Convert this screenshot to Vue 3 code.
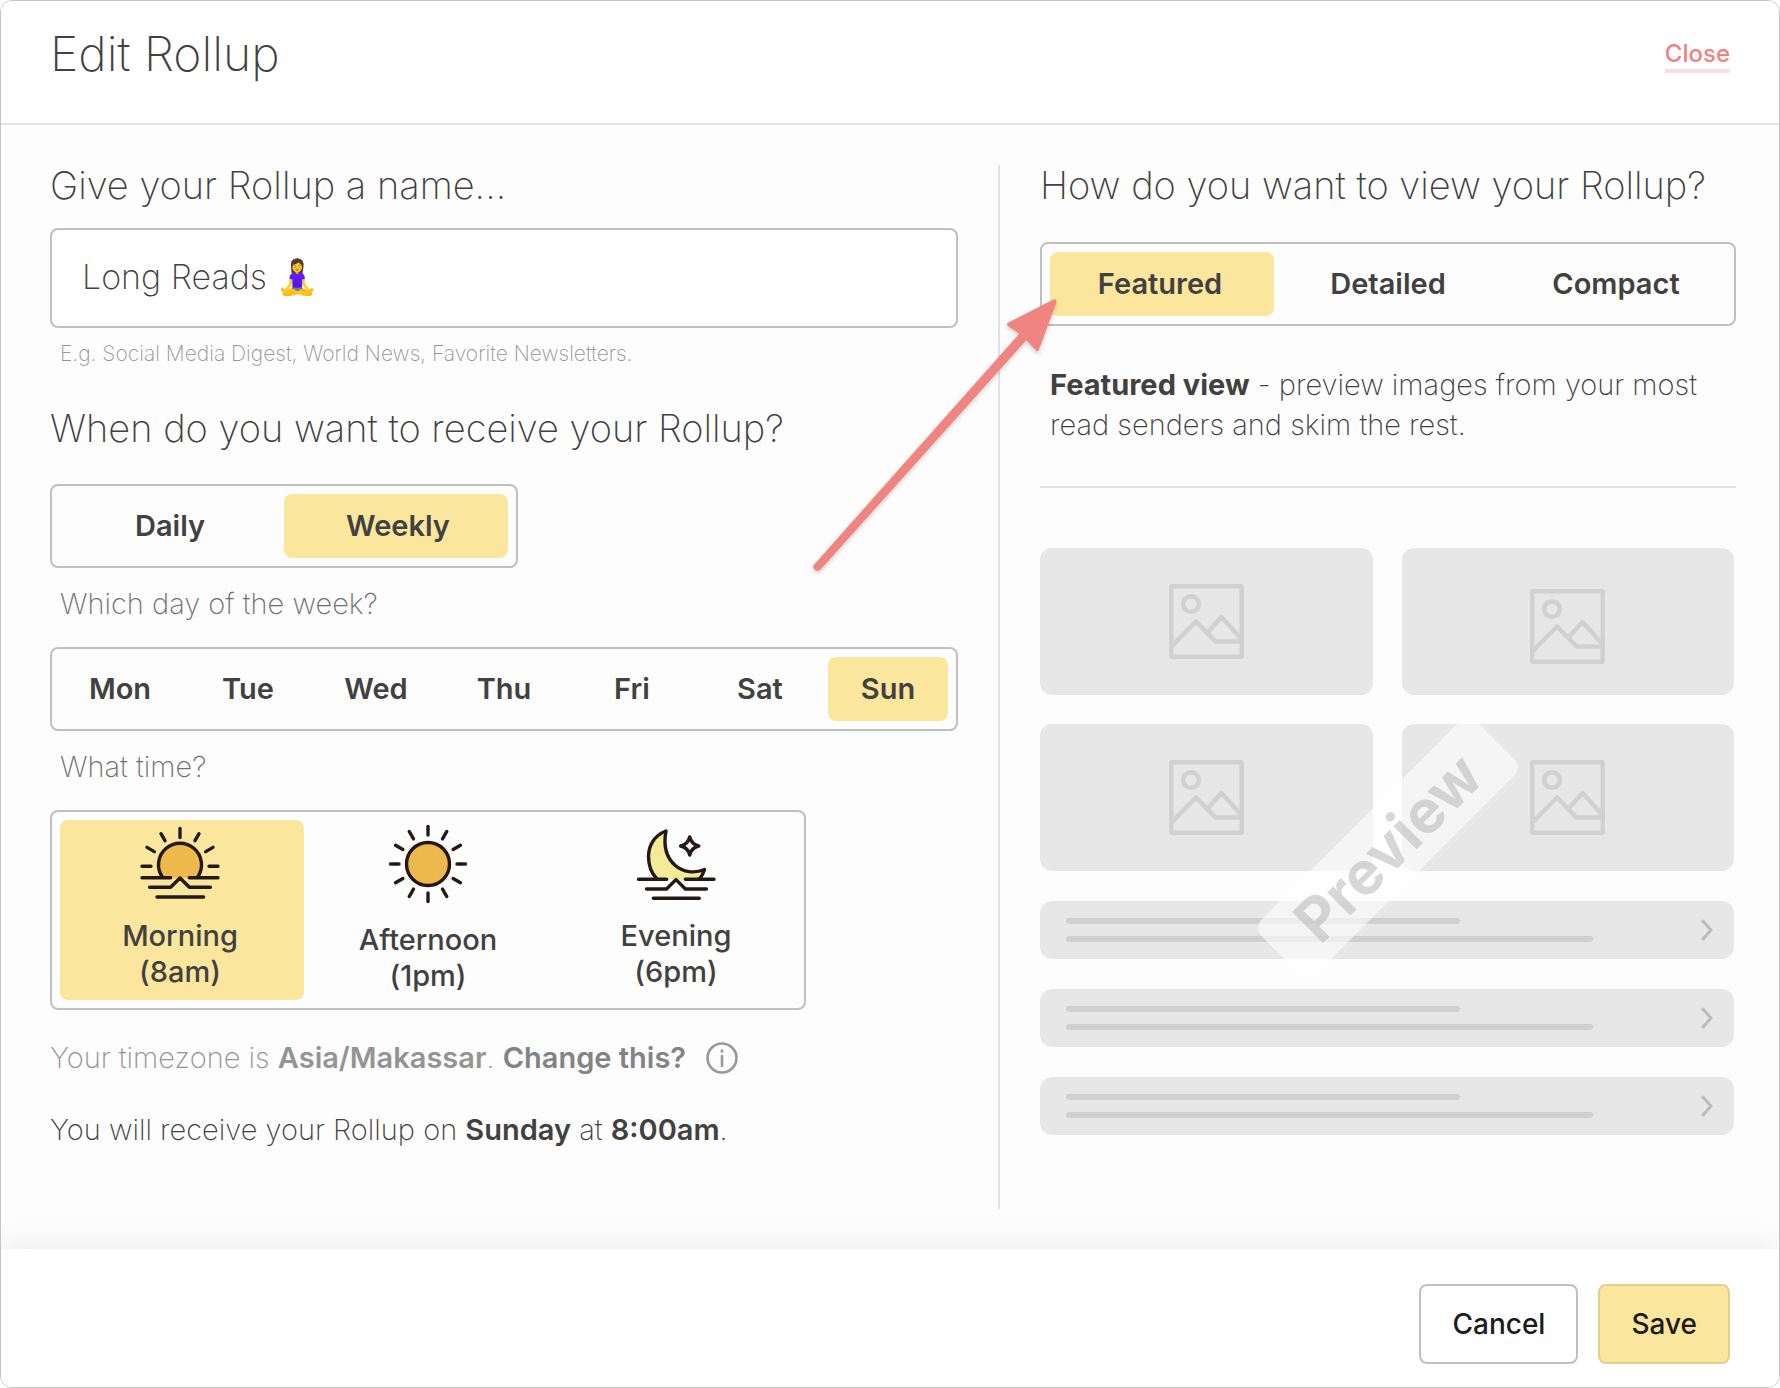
<script setup>
import { ref } from 'vue'

const name = ref('Long Reads 🧘‍♀️')
const frequency = ref('Weekly')
const day = ref('Sun')
const time = ref('Morning')
const view = ref('Featured')

const frequencies = ['Daily', 'Weekly']
const days = ['Mon', 'Tue', 'Wed', 'Thu', 'Fri', 'Sat', 'Sun']
const times = [
  { label: 'Morning', hour: '(8am)' },
  { label: 'Afternoon', hour: '(1pm)' },
  { label: 'Evening', hour: '(6pm)' },
]
const views = ['Featured', 'Detailed', 'Compact']
const rays = Array.from({ length: 12 }, (_, i) => i * 30)
const tiles = [{ low: false }, { low: true }, { low: false }, { low: false }]
</script>

<template>
  <div class="dialog">
    <header class="head">
      <h1>Edit Rollup</h1>
      <a class="close" href="#">Close</a>
    </header>

    <main class="body">
      <section class="settings">
        <label class="heading" for="rollup-name">Give your Rollup a name...</label>
        <input id="rollup-name" v-model="name" class="name" type="text" />
        <p class="hint">E.g. Social Media Digest, World News, Favorite Newsletters.</p>

        <h2 class="heading">When do you want to receive your Rollup?</h2>
        <div class="segment two">
          <button
            v-for="f in frequencies"
            :key="f"
            type="button"
            :class="{ active: f === frequency }"
            @click="frequency = f"
          >{{ f }}</button>
        </div>

        <p class="question">Which day of the week?</p>
        <div class="segment week">
          <button
            v-for="d in days"
            :key="d"
            type="button"
            :class="{ active: d === day }"
            @click="day = d"
          >{{ d }}</button>
        </div>

        <p class="question">What time?</p>
        <div class="segment times">
          <button
            v-for="t in times"
            :key="t.label"
            type="button"
            :class="{ active: t.label === time }"
            @click="time = t.label"
          >
            <svg v-if="t.label === 'Morning'" class="glyph" width="80" height="70" viewBox="0 5 80 70">
              <path d="M22 52A21.5 21.5 0 1 1 58 52L49.3 52.7L40 53L30.7 52.7Z" fill="#edb84c" stroke="none" />
              <path d="M22 51.5A21.5 21.5 0 1 1 58 51.5" />
              <path d="M40 3.5v9M21 8.7l4 7M59 8.7l-4 7M7 22.4l7.3 4.2M73 22.4l-7.3 4.2M2 41.3h9M69 41.3h9" />
              <path d="M2 52.7h28.7M49.3 52.7H78M9.6 62.3h21L40 53l9.4 9.3h21M17 72h46.6" />
            </svg>
            <svg v-else-if="t.label === 'Afternoon'" class="glyph" width="80" height="78" viewBox="0 2 80 78">
              <circle cx="40" cy="40" r="21.5" fill="#edb84c" />
              <path v-for="r in rays" :key="r" d="M40 2.5v8.5" :transform="`rotate(${r} 40 40)`" />
            </svg>
            <svg v-else class="glyph" width="80" height="70" viewBox="0 5 80 70">
              <path d="M30 6C17 11 12.5 22 12.5 31.5C12.5 41 16 49 21 54H30.7L40 55L49.3 54H63C66 51 67.5 48 68.5 44.5C48 53 24 38 30 6Z" fill="#f3eb98" stroke="none" />
              <path d="M21 54C16 49 12.5 41 12.5 31.5C12.5 22 17 11 30 6C24 38 48 53 68.5 44.5C67.5 48 66 51 63.5 54" />
              <path d="M53.7 12C55 17.5 57.5 19.8 62.8 21C57.5 22.2 55 24.5 53.7 30C52.4 24.5 50 22.2 44.6 21C50 19.8 52.4 17.5 53.7 12Z" />
              <path d="M2.5 54.3h28.2M49.3 54.3H78M10.5 64h20L40 54.6l9.4 9.4h21M17.3 73.3h46" />
            </svg>
            <span>{{ t.label }}<br />{{ t.hour }}</span>
          </button>
        </div>

        <p class="zone">
          <span>Your timezone is <b>Asia/Makassar</b>. <a href="#">Change this?</a></span>
          <svg class="info" width="32" height="32" viewBox="0 0 32 32">
            <circle cx="16" cy="16" r="14.5" />
            <path d="M16 14v10" />
            <path d="M16 8.5v1" />
          </svg>
        </p>
        <p class="summary">You will receive your Rollup on <b>Sunday</b> at <b>8:00am</b>.</p>
      </section>

      <section class="view">
        <h2 class="heading">How do you want to view your Rollup?</h2>
        <div class="segment three">
          <button
            v-for="v in views"
            :key="v"
            type="button"
            :class="{ active: v === view }"
            @click="view = v"
          >{{ v }}</button>
        </div>
        <p class="about"><b>Featured view</b> - preview images from your most read senders and skim the rest.</p>

        <div class="preview">
          <div class="tiles">
            <div v-for="(tile, i) in tiles" :key="i" class="tile" :class="{ low: tile.low }">
              <svg width="75" height="75" viewBox="0 0 75 75">
                <rect x="2.2" y="2.2" width="70.6" height="70.6" rx="1" />
                <circle cx="22" cy="20" r="7.8" />
                <path d="M3 62L27 37.5L46.5 57.5H72M39 48L52.5 33L72 54.5" />
              </svg>
            </div>
          </div>
          <div v-for="n in 3" :key="n" class="row">
            <div class="lines"><i></i><i></i></div>
            <svg width="13" height="22" viewBox="0 0 13 22"><path d="M2 2l8 9l-8 9" /></svg>
          </div>
          <div class="stamp">Preview</div>
        </div>

        <svg class="arrow" width="260" height="290" viewBox="0 0 260 290">
          <path d="M13.8 275L219.3 43.7L208 36Q205.5 34 208.5 32.5L253.5 9.5Q257 8 256.3 12.5L239 59.5Q237.5 62.5 235.5 60L226.3 50L20.5 279.5Q17.5 282 15 279.5Q12 277.5 13.8 275Z" />
        </svg>
      </section>
    </main>

    <footer class="foot">
      <button class="btn" type="button">Cancel</button>
      <button class="btn primary" type="button">Save</button>
    </footer>
  </div>
</template>

<style>
body {
  margin: 0;
  background: #fff;
}
</style>

<style scoped>
* {
  box-sizing: border-box;
}

.dialog {
  display: flex;
  flex-direction: column;
  min-height: 100vh;
  border: 1px solid #c4c4c4;
  border-radius: 12px;
  overflow: hidden;
  background: #fdfdfd;
  color: #414141;
  font-family: Inter, "Noto Color Emoji", sans-serif;
  font-size: 29px;
  font-weight: 200;
}

h1, h2, p {
  margin: 0;
  font-weight: inherit;
}

button, input {
  margin: 0;
  color: inherit;
  font: inherit;
}

b {
  font-weight: 600;
}

.head {
  display: flex;
  align-items: flex-start;
  justify-content: space-between;
  height: 124px;
  padding: 28px 49px 0;
  border-bottom: 2px solid #e4e4e4;
  background: #fff;
}

h1 {
  font-size: 48px;
  line-height: 50px;
}

.close {
  margin-top: 10px;
  border-bottom: 4px solid #fbdedd;
  color: #f0827f;
  font-size: 24px;
  font-weight: 500;
  line-height: 30px;
  text-decoration: none;
}

.body {
  display: grid;
  flex: 1;
  grid-template-columns: 948fr 738fr;
  padding: 40px 43px 40px 49px;
}

.settings {
  padding-right: 40px;
}

.heading {
  display: block;
  font-size: 38px;
  line-height: 40px;
  white-space: nowrap;
}

.name {
  display: block;
  width: 100%;
  height: 100px;
  margin-top: 23px;
  padding: 0 30px 4px;
  border: 2px solid #c0c0c0;
  border-radius: 8px;
  background: #fff;
  font-size: 34px;
}

.hint {
  margin: 14px 0 42px 10px;
  color: #949494;
  font-size: 21px;
  line-height: 24px;
}

.segment {
  display: grid;
  gap: 8px;
  padding: 8px;
  border: 2px solid #c0c0c0;
  border-radius: 8px;
}

.segment button {
  height: 64px;
  padding: 0 0 2px;
  border: 0;
  border-radius: 8px;
  background: none;
  font-weight: 600;
}

.segment .active {
  background: #fbe69e;
}

.two {
  width: 468px;
  margin-top: 36px;
  grid-template-columns: repeat(2, 1fr);
}

.week {
  grid-template-columns: repeat(7, 1fr);
}

.times {
  width: 756px;
  grid-template-columns: repeat(3, 1fr);
}

.three {
  margin-top: 37px;
  grid-template-columns: repeat(3, 1fr);
}

/* end options reach half-way into the gap beside them */
.segment:not(.week) button:first-child {
  margin-right: -4px;
  padding-right: 4px;
}

.segment:not(.week) button:last-child {
  margin-left: -4px;
  padding-left: 4px;
}

.question {
  margin: 20px 0 27px 10px;
  color: #707070;
  line-height: 32px;
}

.times button {
  display: flex;
  flex-direction: column;
  align-items: center;
  justify-content: center;
  gap: 18px;
  height: 180px;
  padding-bottom: 0;
  font-weight: 500;
  line-height: 36px;
}

.glyph {
  overflow: visible;
  fill: none;
  stroke: #231a17;
  stroke-width: 3.4;
  stroke-linecap: round;
  stroke-linejoin: round;
}

.zone {
  display: flex;
  align-items: center;
  gap: 20px;
  margin-top: 32px;
  color: #949494;
  line-height: 32px;
}

.zone a {
  color: #838383;
  font-weight: 600;
  text-decoration: none;
}

.info {
  fill: none;
  stroke: #999;
  stroke-width: 2.6;
  stroke-linecap: round;
}

.summary {
  margin-top: 40px;
  line-height: 32px;
}

.view {
  position: relative;
  padding-left: 40px;
  border-left: 2px solid #e2e2e2;
}

.about {
  padding: 39px 10px 41px;
  border-bottom: 2px solid #e2e2e2;
  line-height: 40px;
}

.about b {
  font-weight: 700;
}

.preview {
  position: relative;
  display: grid;
  gap: 30px;
  margin: 60px 2px 0 0;
}

.tiles {
  display: grid;
  grid-template-columns: 1fr 1fr;
  gap: 29px;
}

.tile {
  display: flex;
  align-items: center;
  justify-content: center;
  height: 147px;
  border-radius: 12px;
  background: #e7e7e7;
}

.tile.low {
  padding-top: 10px;
}

.tile svg {
  fill: none;
  stroke: #d1d1d1;
  stroke-width: 4.6;
  stroke-linejoin: round;
}

.row {
  display: flex;
  align-items: center;
  justify-content: space-between;
  height: 58px;
  padding: 0 20px 0 26px;
  border-radius: 12px;
  background: #e7e7e7;
}

.lines {
  display: grid;
  flex: 1;
  gap: 12px;
}

.lines i {
  width: 83%;
  height: 6px;
  border-radius: 3px;
  background: #d0d0d0;
}

.lines i:first-child {
  width: 62%;
}

.row svg {
  fill: none;
  stroke: #bcbcbc;
  stroke-width: 3;
  stroke-linecap: round;
  stroke-linejoin: round;
}

.stamp {
  position: absolute;
  top: 261px;
  left: 196px;
  width: 304px;
  border-radius: 12px;
  background: rgba(255, 255, 255, 0.6);
  color: rgba(170, 170, 170, 0.46);
  font-size: 60px;
  font-weight: 700;
  line-height: 77px;
  text-align: center;
  transform: rotate(-45deg);
}

.arrow {
  position: absolute;
  top: 125px;
  left: -200px;
  overflow: visible;
  fill: #f08480;
  filter: drop-shadow(0 2px 2px rgba(0, 0, 0, 0.2));
  pointer-events: none;
}

.foot {
  position: relative;
  display: flex;
  justify-content: flex-end;
  gap: 20px;
  padding: 35px 49px 23px;
  background: #fff;
  box-shadow: 0 0 32px rgba(0, 0, 0, 0.09);
}

.btn {
  height: 80px;
  padding: 0 31px;
  border: 2px solid #c0c0c0;
  border-radius: 8px;
  background: #fff;
  color: #1c1c1c;
  font-size: 28px;
  font-weight: 500;
}

.primary {
  border-color: #e2d08e;
  background: #fbe69e;
}
</style>
